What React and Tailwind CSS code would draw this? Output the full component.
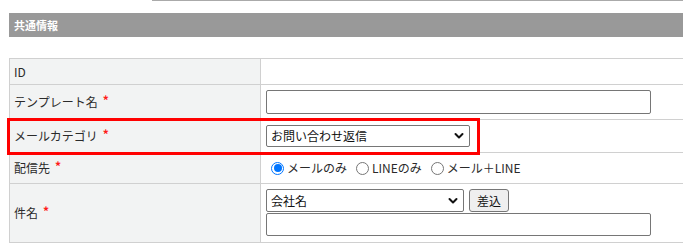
import React from "react";

function Chevron() {
  return (
    <svg width="10" height="7" viewBox="0 0 10 7" className="absolute right-[5px] top-1/2 -translate-y-1/2">
      <polyline points="1.5,1.5 5,5 8.5,1.5" fill="none" stroke="#111" strokeWidth="2" strokeLinecap="round" strokeLinejoin="round" />
    </svg>
  );
}

function FakeSelect({ value, w, h }) {
  return (
    <div className={`relative ${w} ${h} border border-[#767676] rounded-[2px] bg-white flex items-center pl-[4px] text-[12px] text-[#111]`}>
      <span className="leading-none">{value}</span>
      <Chevron />
    </div>
  );
}

function Req() {
  return <span className="text-[#ff1a1a] text-[12px] font-bold ml-[5px] relative -top-[2px]">*</span>;
}

function Label({ children, req }) {
  return (
    <div className="w-[251px] shrink-0 border-r border-[#d0d0d0] bg-[#f2f3f3] flex items-center pl-[4px] text-[12px] text-[#2a2a2a]">
      <span>{children}</span>
      {req && <Req />}
    </div>
  );
}

function Radio({ checked, label }) {
  return (
    <label className="flex items-center">
      <span
        className={`ml-[5px] mr-[3px] w-[13px] h-[13px] rounded-full flex items-center justify-center bg-white ${
          checked ? "border-[1.5px] border-[#0075ff]" : "border border-[#767676]"
        }`}
      >
        {checked && <span className="w-[8px] h-[8px] rounded-full bg-[#0075ff]" />}
      </span>
      <span className="text-[12px] text-[#2a2a2a] mr-[4px]">{label}</span>
    </label>
  );
}

export default function App() {
  return (
    <div className="relative w-[683px] h-[250px] overflow-hidden bg-white font-['Noto_Sans_CJK_JP','Noto_Sans',sans-serif] leading-[16px]">
      <div className="ml-[152px] h-px bg-[#aaaaaa]" />
      <div className="mt-[12px] ml-[9px] h-[24px] bg-[#999999] flex items-center pl-[5px] text-white font-bold text-[11px]">
        共通情報
      </div>
      <div className="mt-[21px] ml-[9px] w-[720px] border-t border-l border-[#d0d0d0]">
        <div className="flex h-[26px] border-b border-[#d0d0d0]">
          <Label>ID</Label>
          <div className="flex-1" />
        </div>
        <div className="flex h-[35px] border-b border-[#d0d0d0]">
          <Label req>テンプレート名</Label>
          <div className="flex-1 pl-[5px] pt-[5px]">
            <div className="w-[385px] h-[24px] border border-[#767676] rounded-[2px] bg-white" />
          </div>
        </div>
        <div className="flex h-[33px] border-b border-[#d0d0d0]">
          <Label req>メールカテゴリ</Label>
          <div className="flex-1 pl-[5px] pt-[5px]">
            <FakeSelect value="お問い合わせ返信" w="w-[204px]" h="h-[22px]" />
          </div>
        </div>
        <div className="flex h-[31px] border-b border-[#d0d0d0]">
          <Label req>配信先</Label>
          <div className="flex-1 flex items-center pl-[5px]">
            <Radio checked label="メールのみ" />
            <Radio label="LINEのみ" />
            <Radio label="メール＋LINE" />
          </div>
        </div>
        <div className="flex h-[59px] border-b border-[#d0d0d0]">
          <Label req>件名</Label>
          <div className="flex-1 pl-[5px] pt-[5px] flex flex-col">
            <div className="flex items-center gap-[5px]">
              <FakeSelect value="会社名" w="w-[198px]" h="h-[23px]" />
              <button className="w-[40px] h-[23px] border border-[#767676] rounded-[3px] bg-[#efefef] text-[12px] text-[#111] flex items-center justify-center">
                差込
              </button>
            </div>
            <div className="mt-[1px] w-[385px] h-[23px] border border-[#767676] rounded-[2px] bg-white" />
          </div>
        </div>
      </div>
      <div className="absolute left-[7px] top-[118px] w-[473px] h-[37px] border-[3px] border-[#ff0000]" />
    </div>
  );
}
